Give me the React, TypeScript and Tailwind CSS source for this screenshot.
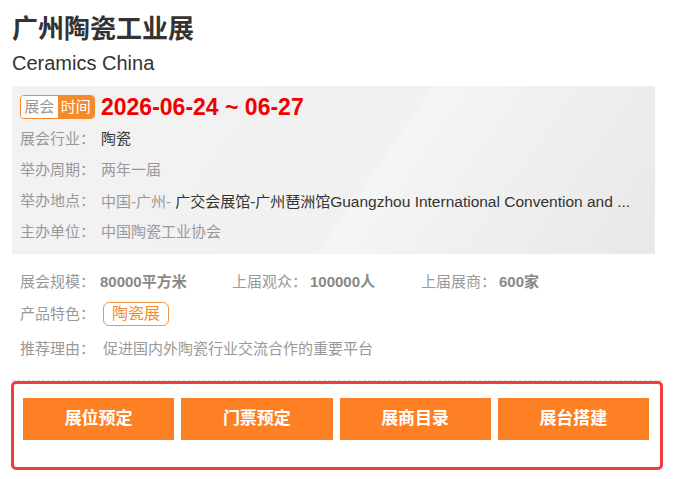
const FONT = "font-['Liberation_Sans','Noto_Sans_CJK_SC',sans-serif]";

const INFO_ROWS: { label: string; value: React.ReactNode }[] = [
  { label: '展会行业：', value: <span className="text-[#333]">陶瓷</span> },
  { label: '举办周期：', value: <span className="text-[#999]">两年一届</span> },
  {
    label: '举办地点：',
    value: (
      <>
        <span className="text-[#999]">中国-广州- </span>
        <span className="text-[#333]">广交会展馆-广州琶洲馆</span>
        <span className="text-[15.5px] text-[#333]">Guangzhou International Convention and ...</span>
      </>
    ),
  },
  { label: '主办单位：', value: <span className="text-[#999]">中国陶瓷工业协会</span> },
];

const ACTIONS = ['展位预定', '门票预定', '展商目录', '展台搭建'];

export default function App() {
  return (
    <div className={`${FONT} h-[479px] w-[674px] bg-white px-[12px] pt-[12px]`}>
      <h1 className="text-[26px] font-bold leading-[34px] text-[#333]">广州陶瓷工业展</h1>
      <p className="mt-[3px] text-[20px] leading-[28px] text-[#333]">Ceramics China</p>

      {/* 展会信息 */}
      <div className="mt-[9px] w-[643px] bg-[#f0f0f0] bg-[linear-gradient(125deg,#f2f2f2_0%,#f1f1f1_55%,#f5f5f5_56%,#efefef_75%,#e8e8e8_100%)] px-[8px] pb-[6px] pt-[9px]">
        <div className="flex h-[24px] items-center">
          <div className="flex h-[24px] w-[75px] overflow-hidden rounded-[4px] border border-[#f58a2a] text-[15px] leading-[22px]">
            <span className="flex-1 bg-white text-center text-[#999]">展会</span>
            <span className="flex-1 bg-[#f58a2a] text-center text-white">时间</span>
          </div>
          <span className="ml-[6px] text-[23px] font-bold leading-[24px] text-[#f00000]">2026-06-24 ~ 06-27</span>
        </div>
        <div className="mt-[5px]">
          {INFO_ROWS.map((r) => (
            <div key={r.label} className="flex h-[31px] items-center text-[15px]">
              <span className="w-[81px] shrink-0 text-[#999]">{r.label}</span>
              <span className="whitespace-nowrap">{r.value}</span>
            </div>
          ))}
        </div>
      </div>

      {/* 规模与特色 */}
      <div className="mt-[13px] px-[8px] text-[15px]">
        <div className="flex h-[30px] items-center">
          <div className="flex w-[212px]">
            <span className="w-[80px] text-[#999]">展会规模：</span>
            <span className="font-bold text-[#888]">80000平方米</span>
          </div>
          <div className="flex w-[189px]">
            <span className="w-[78px] text-[#999]">上届观众：</span>
            <span className="font-bold text-[#888]">100000人</span>
          </div>
          <div className="flex">
            <span className="w-[78px] text-[#999]">上届展商：</span>
            <span className="font-bold text-[#888]">600家</span>
          </div>
        </div>
        <div className="flex h-[34px] items-center">
          <span className="w-[83px] text-[#999]">产品特色：</span>
          <span className="flex h-[24px] w-[66px] items-center justify-center rounded-[6px] border border-[#f0944a] text-[16px] text-[#f58a2a]">
            陶瓷展
          </span>
        </div>
        <div className="flex h-[36px] items-center">
          <span className="w-[83px] text-[#999]">推荐理由：</span>
          <span className="text-[#999]">促进国内外陶瓷行业交流合作的重要平台</span>
        </div>
      </div>

      <div className="mt-[13px] w-[650px] border-t border-dashed border-[#d9d9d9]" />

      {/* 操作按钮 */}
      <div className="-ml-[1px] w-[652px] rounded-[5px] border-[3px] border-[#f03e3e] pb-[27px] pl-[9px] pr-[11px] pt-[14px]">
        <div className="grid grid-cols-4 gap-[7px]">
          {ACTIONS.map((a) => (
            <button
              key={a}
              className="h-[42px] bg-[#fe8024] text-[17px] font-bold text-white"
            >
              {a}
            </button>
          ))}
        </div>
      </div>
    </div>
  );
}
